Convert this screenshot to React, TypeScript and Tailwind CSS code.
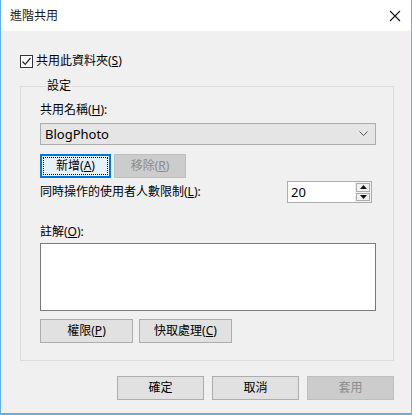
import React from 'react';

const font = { fontFamily: '"Noto Sans", "Noto Sans CJK TC", sans-serif' };

function Btn({ children, className = '', disabled = false, focused = false }: { children: React.ReactNode; className?: string; disabled?: boolean; focused?: boolean }) {
  if (focused) {
    return (
      <div className={`flex border-2 border-[#0078d7] bg-[#e5f1fb] p-[1px] ${className}`}>
        <div className="flex flex-1 items-center justify-center border border-dotted border-black text-[12px] text-black">{children}</div>
      </div>
    );
  }
  return (
    <div
      className={`flex items-center justify-center border text-[12px] ${
        disabled ? 'border-[#bfbfbf] bg-[#cccccc] text-[#8c8c8c]' : 'border-[#adadad] bg-[#e1e1e1] text-black'
      } ${className}`}
    >
      {children}
    </div>
  );
}

export default function App() {
  return (
    <div className="flex h-[415px] w-[412px] flex-col border-x border-b-2 border-[#6aaee6] bg-[#f0f0f0] text-[12px] leading-[16px] text-black" style={font}>
      {/* Title bar */}
      <div className="flex h-[31px] items-center justify-between bg-white pl-[9px] pr-[9px]">
        <span className="text-[12px] text-[#1a1a1a]">進階共用</span>
        <svg width="12" height="12" viewBox="0 0 12 12" className="mr-[1px]">
          <path d="M1 1 L11 11 M11 1 L1 11" stroke="#111" strokeWidth="1.1" />
        </svg>
      </div>

      <div className="flex flex-1 flex-col pl-[19px] pr-[17px]">
        {/* Checkbox */}
        <div className="mt-[22px] flex items-center gap-[3px]">
          <div className="flex h-[13px] w-[13px] items-center justify-center border border-[#333] bg-white">
            <svg width="11" height="11" viewBox="0 0 11 11">
              <path d="M1.5 5.5 L4.2 8.3 L9.5 2" stroke="#222" strokeWidth="1.2" fill="none" />
            </svg>
          </div>
          <span>
            共用此資料夾(<u>S</u>)
          </span>
        </div>

        {/* Group box */}
        <fieldset className="mt-[9px] h-[283px] border border-[#dcdcdc] pb-0 pl-[19px] pr-[17px] pt-0">
          <legend className="ml-[6px] px-[1px] text-[12px]">設定</legend>
          <div className="mt-[8px]">
            共用名稱(<u>H</u>):
          </div>
          <div className="mt-[5px] flex h-[22px] items-center justify-between border border-[#acacac] bg-[#e5e5e5] pl-[4px] pr-[7px]">
            <span className="text-[13px]">BlogPhoto</span>
            <svg width="9" height="6" viewBox="0 0 9 6">
              <path d="M0.5 0.5 L4.5 4.5 L8.5 0.5" stroke="#555" strokeWidth="1" fill="none" />
            </svg>
          </div>
          <div className="mt-[9px] flex gap-[3px]">
            <Btn focused className="h-[24px] w-[71px]">
              <span>
                新增(<u>A</u>)
              </span>
            </Btn>
            <Btn disabled className="h-[24px] w-[72px]">
              <span>
                移除(<u>R</u>)
              </span>
            </Btn>
          </div>
          <div className="mt-[3px] flex items-center justify-between">
            <span>
              同時操作的使用者人數限制(<u>L</u>):
            </span>
            <div className="mr-[4px] flex h-[22px] w-[85px] border border-[#adadad] bg-white">
              <div className="flex flex-1 items-center pl-[3px] text-[13px]">20</div>
              <div className="flex w-[16px] flex-col gap-[1px] bg-[#f0f0f0] p-[1px]">
                <div className="flex flex-1 items-center justify-center border border-[#adadad] bg-[#f0f0f0]">
                  <svg width="7" height="4" viewBox="0 0 7 4"><path d="M0 4 L3.5 0 L7 4 Z" fill="#111" /></svg>
                </div>
                <div className="flex flex-1 items-center justify-center border border-[#adadad] bg-[#f0f0f0]">
                  <svg width="7" height="4" viewBox="0 0 7 4"><path d="M0 0 L3.5 4 L7 0 Z" fill="#111" /></svg>
                </div>
              </div>
            </div>
          </div>
          <div className="mt-[21px]">
            註解(<u>O</u>):
          </div>
          <div className="mt-[3px] h-[68px] border border-[#7a7a7a] bg-white" />
          <div className="mt-[8px] flex gap-[6px]">
            <Btn className="h-[24px] w-[93px]">
              <span>
                權限(<u>P</u>)
              </span>
            </Btn>
            <Btn className="h-[24px] w-[93px]">
              <span>
                快取處理(<u>C</u>)
              </span>
            </Btn>
          </div>
        </fieldset>

        {/* Footer buttons */}
        <div className="mt-[15px] flex justify-end gap-[8px]">
          <Btn className="h-[24px] w-[87px]">確定</Btn>
          <Btn className="h-[24px] w-[87px]">取消</Btn>
          <Btn disabled className="h-[24px] w-[87px]">套用</Btn>
        </div>
      </div>
    </div>
  );
}
